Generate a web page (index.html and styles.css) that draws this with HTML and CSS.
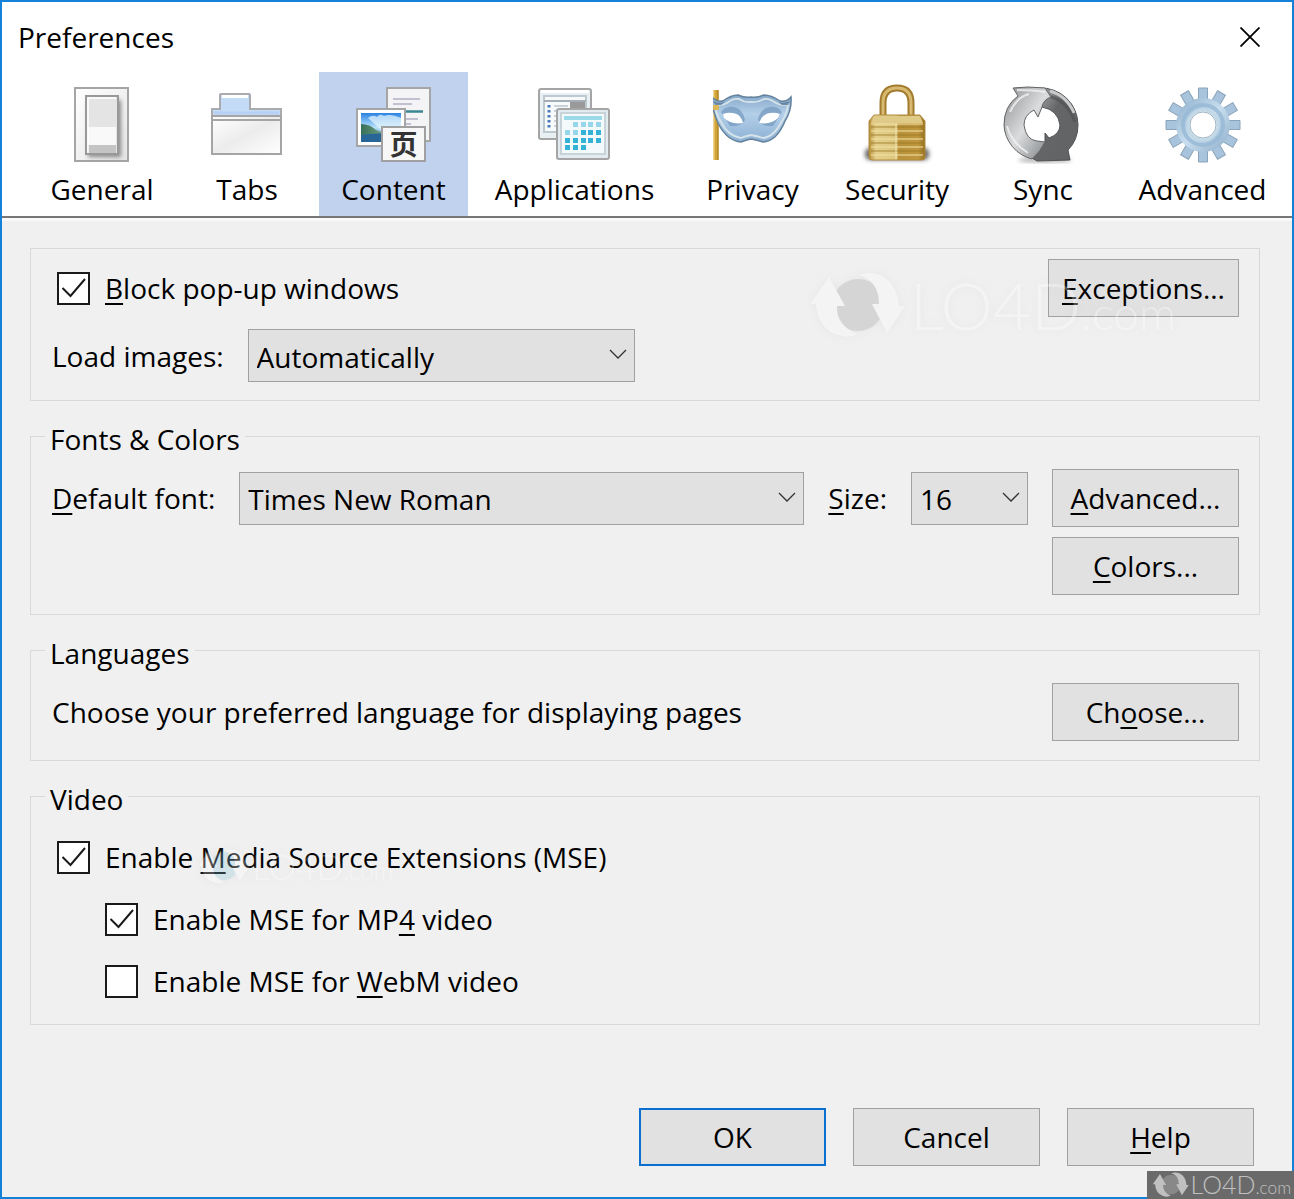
FILE: index.html
```
<!DOCTYPE html>
<html lang="en">
<head>
    <meta charset="UTF-8">
    <meta name="viewport" content="width=device-width, initial-scale=1.0">
    <title>Preferences</title>
    <link rel="stylesheet" href="styles.css">
</head>
<body>
    <div class="window">
        <header class="titlebar">
            <h1>Preferences</h1>
            <button class="close" aria-label="Close">
                <svg width="20" height="20" viewBox="0 0 20 20"><path d="M0.500 0.500L19.500 19.500M19.500 0.500L0.500 19.500" stroke="#000" stroke-width="1.800"/></svg>
            </button>
        </header>

        <nav class="toolbar">
            <button class="tab">
                <svg class="icon" viewBox="0 0 80 80">
                    <defs>
                        <linearGradient id="plate" x1="0" x2="1" y2="1"><stop offset="0" stop-color="#fff"/><stop offset="1" stop-color="#e4e4e4"/></linearGradient>
                        <filter id="soft" x="-30%" y="-30%" width="160%" height="160%"><feGaussianBlur stdDeviation="2"/></filter>
                    </defs>
                    <rect x="13" y="4" width="53" height="73" fill="url(#plate)" stroke="#a5a5a5" stroke-width="2"/>
                    <rect x="26" y="16" width="33" height="57" fill="#888" filter="url(#soft)"/>
                    <rect x="24" y="12" width="32" height="58" fill="#e4e4e4" stroke="#999" stroke-width="2"/>
                    <rect x="26" y="43" width="28" height="18" fill="#f9f9f9"/>
                    <rect x="26" y="61" width="28" height="8" fill="#c4c4c4"/>
                    <path d="M26 69V14H54" fill="none" stroke="#fff" stroke-width="1.500"/>
                </svg>
                General
            </button>
            <button class="tab">
                <svg class="icon" viewBox="0 0 80 80">
                    <defs>
                        <linearGradient id="folder" x1="0" x2="1" y2="1"><stop offset="0" stop-color="#fff"/><stop offset=".5" stop-color="#ececec"/><stop offset="1" stop-color="#fff"/></linearGradient>
                    </defs>
                    <path d="M5 32V25H13V11q0-1 1-1H42q1 0 1 1V25H74V32Z" fill="#c4dbf7" stroke="#a9abae" stroke-width="2"/>
                    <path d="M15 12.500H41" stroke="#fff" stroke-width="3"/>
                    <path d="M7 29H72" stroke="#b8d0f3" stroke-width="3"/>
                    <rect x="5" y="32" width="69" height="38" fill="url(#folder)" stroke="#a5a5a5" stroke-width="2"/>
                    <path d="M5 36H74" stroke="#a5a5a5" stroke-width="2"/>
                </svg>
                Tabs
            </button>
            <button class="tab selected">
                <svg class="icon" viewBox="0 0 80 80">
                    <defs>
                        <linearGradient id="sky" x2="0" y2="1"><stop offset="0" stop-color="#2b83e2"/><stop offset=".5" stop-color="#b9e2fa"/><stop offset="1" stop-color="#2d6d9b"/></linearGradient>
                        <linearGradient id="trees" x2="1"><stop offset="0" stop-color="#386f58"/><stop offset="1" stop-color="#7fae8c"/></linearGradient>
                    </defs>
                    <rect x="33" y="4" width="43" height="53" fill="#f4f4f6" stroke="#a5a5a5" stroke-width="2"/>
                    <path d="M39 15H66M39 20H58M50 35H64M50 40H57" stroke="#c2c0d0" stroke-width="2"/>
                    <path d="M50 27.500H69" stroke="#3c8793" stroke-width="2.500"/>
                    <rect x="3" y="25" width="48" height="37" fill="#fff" stroke="#a5a5a5" stroke-width="2"/>
                    <rect x="7" y="29" width="40" height="29" fill="url(#sky)"/>
                    <path d="M14 34q5-4 9-1q3-4 7-1q6-3 17 2v12H27z" fill="#e8f6fe" opacity=".7"/>
                    <path d="M7 40q9 0 15 6l14 6H7z" fill="url(#trees)"/>
                    <path d="M7 51q17-3 40 0v7H7z" fill="#276697"/>
                    <rect x="28" y="43" width="43" height="34" fill="#f7f7f7" stroke="#a0a0a0" stroke-width="2"/>
                    <text class="glyph" x="49.500" y="71">页</text>
                </svg>
                Content
            </button>
            <button class="tab">
                <svg class="icon" viewBox="0 0 80 80">
                    <rect x="4" y="5" width="52" height="50" rx="2" fill="#e9f0f3" stroke="#a5a5a5" stroke-width="2"/>
                    <path d="M6 7.500H54" stroke="#fff" stroke-width="3"/>
                    <rect x="9" y="12" width="42" height="36" fill="#f7fafa" stroke="#bdc9cf" stroke-width="2"/>
                    <path d="M9 17H51" stroke="#a4aeb4" stroke-width="2"/>
                    <rect x="35" y="18" width="15" height="8" fill="#999"/>
                    <path d="M14 21V46" stroke="#4c79bb" stroke-width="3" stroke-dasharray="2.500 2.500"/>
                    <path d="M19 22H33M19 27H23M19 32H22M19 37H22M19 42H22" stroke="#bcc4d1" stroke-width="1.500"/>
                    <rect x="22" y="25" width="52" height="50" rx="2" fill="#e2ecf0" stroke="#a5a5a5" stroke-width="2"/>
                    <rect x="26" y="29" width="44" height="41" fill="#f4fafc" stroke="#c7d3d8" stroke-width="2"/>
                    <path d="M29 34H67" stroke="#9bdbe9" stroke-width="4"/>
                    <g fill="#35b2d7">
                        <path d="M38 38h5v5h-5zM46 38h5v5h-5zM53 38h5v5h-5zM61 38h5v5h-5zM30 46h5v5h-5zM38 46h5v5h-5z" opacity=".5"/>
                        <path d="M46 46h5v5h-5zM53 46h5v5h-5zM61 46h5v5h-5zM30 54h5v5h-5zM38 54h5v5h-5zM46 54h5v5h-5zM53 54h5v5h-5zM61 54h5v5h-5zM30 61h5v5h-5zM38 61h5v5h-5zM46 61h5v5h-5z"/>
                    </g>
                </svg>
                Applications
            </button>
            <button class="tab">
                <svg class="icon" viewBox="2 0 80 80">
                    <defs>
                        <linearGradient id="mask" x2="0" y2="1"><stop offset="0" stop-color="#86a8c9"/><stop offset=".4" stop-color="#b3cfe9"/><stop offset="1" stop-color="#8db1d4"/></linearGradient>
                    </defs>
                    <rect x="2.500" y="6" width="5" height="70" fill="#d2a437"/>
                    <path d="M3 6V76" stroke="#f0d486" stroke-width="1"/>
                    <path d="M7 6V76" stroke="#a4771b" stroke-width="1"/>
                    <path d="M1 13Q5 18 12 17Q20 11 27 11Q34 14 40 13Q46 14 53 11Q60 11 69 17Q76 18 80 13Q81 26 74 37Q66 57 52 58Q46 56 40 55Q35 56 30 58Q16 57 7 39Q1 26 1 13Z" fill="url(#mask)" stroke="#64829c" stroke-width="1.500"/>
                    <path d="M4 20Q10 22 16 19Q22 14 28 15Q34 19 40 18Q46 19 53 15Q58 14 65 19Q71 22 77 20Q76 30 71 37Q63 53 52 54Q46 52 40 51Q35 52 30 54Q17 52 10 38Q4 28 4 20Z" fill="none" stroke="#d6e4ea" stroke-width="1.800"/>
                    <path d="M2 17Q8 20 14 18L10 21H4ZM79 17Q73 20 67 18L71 21H77Z" fill="#496b89" opacity=".7"/>
                    <path d="M10 28Q14 22 23 23Q32 25 34 36Q30 43 19 42ZM71 28Q67 22 58 23Q49 25 47 36Q51 43 62 42Z" fill="#7499be" opacity=".7"/>
                    <path d="M12 30Q17 28 22 29Q30 30 32 39Q20 41 13 34ZM69 30Q64 28 59 29Q51 30 48 39Q60 41 67 34Z" fill="#fff"/>
                    <rect x="2" y="21" width="6" height="5" rx="1" fill="#dcb755"/>
                </svg>
                Privacy
            </button>
            <button class="tab">
                <svg class="icon" viewBox="0 0 80 80">
                    <defs>
                        <linearGradient id="brass" x2="1"><stop offset="0" stop-color="#b28c38"/><stop offset=".12" stop-color="#e5d08c"/><stop offset=".5" stop-color="#dcc67d"/><stop offset=".52" stop-color="#b8913a"/><stop offset=".88" stop-color="#be963c"/><stop offset="1" stop-color="#94701f"/></linearGradient>
                    </defs>
                    <rect x="8" y="64" width="64" height="12" rx="5" fill="#666" filter="url(#soft)"/>
                    <path d="M26 38V19Q26 4 40 4T54 19V38" fill="none" stroke="#a37b2e" stroke-width="7"/>
                    <path d="M26 38V19Q26 4 40 4T54 19V38" fill="none" stroke="#d7ba70" stroke-width="3"/>
                    <path d="M17 31H63L68 37V73q0 3-3 3H15q-3 0-3-3V37z" fill="url(#brass)" stroke="#b18c3e" stroke-width="1"/>
                    <path d="M17 32H63L66 39H14z" fill="#e0ca87"/>
                    <path d="M14 40H66M14 47H66M14 55H66M14 63H66M14 71H66" stroke="#f0dda2" stroke-width="1.500" opacity=".75"/>
                    <path d="M14 43H66M14 51H66M14 59H66M14 67H66" stroke="#9c7929" stroke-width="1.500" opacity=".55"/>
                    <path d="M39 40V75" stroke="#f2e4b5"/>
                </svg>
                Security
            </button>
            <button class="tab">
                <svg class="icon" viewBox="0 0 80 80">
                    <defs>
                        <linearGradient id="steel" x1="0" x2="1" y2="1"><stop offset="0" stop-color="#8c8e90"/><stop offset=".5" stop-color="#dadcde"/><stop offset="1" stop-color="#777a7c"/></linearGradient>
                        <linearGradient id="dark" x1="0" x2="1" y2="1"><stop offset="0" stop-color="#bbb"/><stop offset=".4" stop-color="#646668"/><stop offset="1" stop-color="#606264"/></linearGradient>
                    </defs>
                    <ellipse cx="42" cy="76" rx="27" ry="2" fill="#999" filter="url(#soft)"/>
                    <path d="M36 4A37 37 0 0 1 75 41Q75 56 65 66L67 76L34 77L29 74L42 58V49L46 54Q57 50 57 41Q55 26 39 23Z" fill="url(#dark)" stroke="#505254"/>
                    <path d="M10 4Q24 2 42 4L48 13Q40 16 39 23L35 33L31 26Q21 31 21 41Q23 56 34 57L42 58Q38 67 29 75A37 37 0 0 1 1 41Q1 22 15 12Z" fill="url(#steel)" stroke="#626466"/>
                    <path d="M14 6Q30 6 42 8M7 28Q14 13 26 10M4 42Q8 58 25 69" fill="none" stroke="#f2f3f4" stroke-width="2" opacity=".8"/>
                    <path d="M47 7Q64 12 71 29" fill="none" stroke="#c9cacb" stroke-width="3"/>
                    <path d="M48 13Q64 17 72 38" fill="none" stroke="#4c4e50" stroke-width="3" opacity=".6"/>
                </svg>
                Sync
            </button>
            <button class="tab">
                <svg class="icon" viewBox="0 0 80 80">
                    <defs>
                        <linearGradient id="gear" x1="0" x2="1" y2="1"><stop offset="0" stop-color="#8caecb"/><stop offset=".5" stop-color="#c9deef"/><stop offset="1" stop-color="#8bacc8"/></linearGradient>
                        <path id="teeth" d="M35.500 4h9v14l1 23l-1 23v14h-9v-14l-1-23l1-23z"/>
                    </defs>
                    <g fill="#a8c4dc" stroke="#8ba3b8" stroke-width="1">
                        <use href="#teeth"/>
                        <use href="#teeth" transform="rotate(30 40 41)"/>
                        <use href="#teeth" transform="rotate(60 40 41)"/>
                        <use href="#teeth" transform="rotate(90 40 41)"/>
                        <use href="#teeth" transform="rotate(120 40 41)"/>
                        <use href="#teeth" transform="rotate(150 40 41)"/>
                    </g>
                    <circle cx="40" cy="41" r="27" fill="url(#gear)"/>
                    <circle cx="40" cy="41" r="20" fill="none" stroke="#96b8d4" stroke-width="4" opacity=".8"/>
                    <circle cx="40" cy="41" r="15" fill="#fff" stroke="#c2d8e7" stroke-width="3"/>
                    <circle cx="40" cy="41" r="13" fill="#fff" stroke="#9eb2c2"/>
                </svg>
                Advanced
            </button>
        </nav>

        <main class="pane">
            <fieldset class="group plain">
                <div class="row">
                    <label class="check"><input type="checkbox" checked><span><u>B</u>lock pop-up windows</span></label>
                    <button class="button push wide"><span><u>E</u>xceptions...</span></button>
                </div>
                <div class="row">
                    <label for="images">Load images:</label>
                    <select id="images" class="images"><option>Automatically</option></select>
                </div>
            </fieldset>

            <fieldset class="group">
                <legend>Fonts &amp; Colors</legend>
                <div class="row">
                    <label for="font"><u>D</u>efault font:</label>
                    <select id="font" class="font"><option>Times New Roman</option></select>
                    <label for="size"><u>S</u>ize:</label>
                    <select id="size" class="size"><option>16</option></select>
                    <button class="button"><span><u>A</u>dvanced...</span></button>
                </div>
                <div class="row second">
                    <button class="button push"><span><u>C</u>olors...</span></button>
                </div>
            </fieldset>

            <fieldset class="group">
                <legend>Languages</legend>
                <div class="row">
                    <span>Choose your preferred language for displaying pages</span>
                    <button class="button push"><span>Ch<u>o</u>ose...</span></button>
                </div>
            </fieldset>

            <fieldset class="group">
                <legend>Video</legend>
                <div class="checks">
                    <label class="check"><input type="checkbox" checked><span>Enable <u>M</u>edia Source Extensions (MSE)</span></label>
                    <label class="check nested"><input type="checkbox" checked><span>Enable MSE for MP<u>4</u> video</span></label>
                    <label class="check nested"><input type="checkbox"><span>Enable MSE for <u>W</u>ebM video</span></label>
                </div>
            </fieldset>
        </main>

        <footer class="actions">
            <button class="button default">OK</button>
            <button class="button">Cancel</button>
            <button class="button"><span><u>H</u>elp</span></button>
        </footer>

        <!-- watermarks over the dialog -->
        <svg class="mark mark-large" viewBox="0 0 360 74" aria-hidden="true">
            <defs>
                <g id="arrows">
                    <path d="M1 35L20 8L36 37H28Q27 56 48 65Q41 70 28 66Q8 58 7 35Z"/>
                    <path d="M50 6Q68 0 80 12Q89 22 90 37H96L78 64L63 35H70Q70 12 50 6Z"/>
                </g>
            </defs>
            <circle class="globe" cx="49" cy="36" r="26"/>
            <use href="#arrows"/>
            <text x="101" y="61" font-size="66">LO4D<tspan font-size="46">.com</tspan></text>
        </svg>
        <svg class="mark mark-small" viewBox="0 0 360 74" aria-hidden="true">
            <circle class="globe" cx="49" cy="36" r="26"/>
            <use href="#arrows"/>
            <text x="101" y="61" font-size="66">LO4D<tspan font-size="46">.com</tspan></text>
        </svg>
        <div class="badge">
            <svg viewBox="0 0 360 74" aria-hidden="true">
                <circle class="globe" cx="49" cy="36" r="26"/>
                <use href="#arrows"/>
                <text x="101" y="61" font-size="66">LO4D<tspan font-size="46">.com</tspan></text>
            </svg>
        </div>
    </div>
</body>
</html>
```
FILE: styles.css
```
* {
    box-sizing: border-box;
}
body {
    margin: 0;
    font-family: "Open Sans", "Noto Sans", sans-serif;
    font-size: 28px;
    line-height: 36px;
    color: #000;
}
button, select, input {
    font: inherit;
    color: inherit;
}
u {
    text-decoration-thickness: 2px;
    text-underline-offset: 4px;
}
.window {
    position: relative;
    display: flex;
    flex-direction: column;
    min-height: 100vh;
    background: #f0f0f0;
    border: 2px solid #1580d8;
}
.titlebar {
    display: flex;
    justify-content: space-between;
    align-items: center;
    height: 70px;
    padding: 0 32px 0 16px;
    background: #fff;
}
h1 {
    margin: 0;
    font-size: 28px;
    font-weight: 400;
}
.close {
    display: flex;
    padding: 0;
    border: none;
    background: none;
}
.toolbar {
    display: grid;
    grid-template-columns: 146fr 144fr 149fr 213fr 143fr 146fr 146fr 173fr;
    padding: 0 3px 0 27px;
    background: #fff;
    border-bottom: 2px solid #777;
    box-shadow: 0 3px #f9f9f9;
}
.tab {
    display: flex;
    flex-direction: column;
    align-items: center;
    gap: 7px;
    height: 144px;
    padding: 12px 0 0;
    border: none;
    background: none;
}
.tab.selected {
    background: #c1d2ee;
}
.icon {
    width: 80px;
    height: 80px;
}
.glyph {
    font-family: "Noto Sans CJK SC", sans-serif;
    font-size: 28px;
    font-weight: 700;
    text-anchor: middle;
    fill: #333;
}
.pane {
    display: flex;
    flex-direction: column;
    gap: 16px;
    padding: 30px 32px 24px 28px;
}
.group {
    min-width: 0;
    margin: 0;
    padding: 14px 20px 19px 14px;
    border: 1px solid #d9d9d9;
}
.group.plain {
    padding-top: 10px;
    padding-bottom: 18px;
}
legend {
    padding: 6px 5px 0;
    line-height: 32px;
}
.row {
    display: flex;
    align-items: center;
    gap: 24px;
    padding-left: 7px;
}
.plain .row + .row {
    margin-top: 12px;
}
.row.second {
    margin-top: 10px;
}
.button {
    width: 187px;
    height: 58px;
    padding: 0;
    background: #e1e1e1;
    border: 1px solid #a0a0a0;
}
.button.wide {
    width: 191px;
}
.button.push {
    margin-left: auto;
}
.button.default {
    border: 2px solid #0b6fd0;
}
select {
    height: 53px;
    padding: 2px 40px 0 8px;
    border: 1px solid #a0a0a0;
    border-radius: 0;
    appearance: none;
    background: #e1e1e1 url("data:image/svg+xml,%3Csvg xmlns='http://www.w3.org/2000/svg' width='18' height='10'%3E%3Cpath d='M1 1l8 8 8-8' fill='none' stroke='%23333' stroke-width='1.300'/%3E%3C/svg%3E") no-repeat right 7px top 19px;
}
.images {
    width: 387px;
}
.font {
    flex: 1;
    min-width: 0;
}
.size {
    width: 117px;
}
.check {
    display: flex;
    align-items: center;
    gap: 15px;
    height: 48px;
    padding-left: 5px;
}
.check input {
    width: 33px;
    height: 33px;
    margin: 0;
    appearance: none;
    background: #fff;
    border: 2px solid #1a1a1a;
}
.check input:checked {
    background: #fff url("data:image/svg+xml,%3Csvg xmlns='http://www.w3.org/2000/svg' width='26' height='22'%3E%3Cpath d='M1.500 11l8 8L24 2' fill='none' stroke='%231a1a1a' stroke-width='2'/%3E%3C/svg%3E") no-repeat center;
}
.checks {
    display: grid;
    gap: 14px;
    padding: 4px 0 0 7px;
}
.nested {
    margin-left: 48px;
}
.actions {
    display: flex;
    justify-content: flex-end;
    gap: 27px;
    margin-top: auto;
    padding: 0 38px 31px;
}
.mark {
    position: absolute;
    overflow: visible;
    pointer-events: none;
    font-family: Lato, sans-serif;
    font-weight: 300;
    fill: #fff;
    opacity: 0.3;
    filter: drop-shadow(0 0 4px #ccc);
}
.mark .globe {
    fill: #999;
}
.mark-large {
    top: 267px;
    left: 807px;
    width: 360px;
}
.mark-small {
    top: 845px;
    left: 196px;
    width: 192px;
}
.mark-small .globe {
    fill: #8ec4dc;
}
.badge {
    position: absolute;
    right: -2px;
    bottom: -2px;
    display: flex;
    width: 147px;
    height: 28px;
    padding: 0 4px;
    background: #6a6a6a;
    font-family: Lato, sans-serif;
    font-weight: 300;
    fill: #c0c0c0;
}
.badge svg {
    width: 100%;
    overflow: visible;
}
.badge .globe {
    fill: #888;
}
```
